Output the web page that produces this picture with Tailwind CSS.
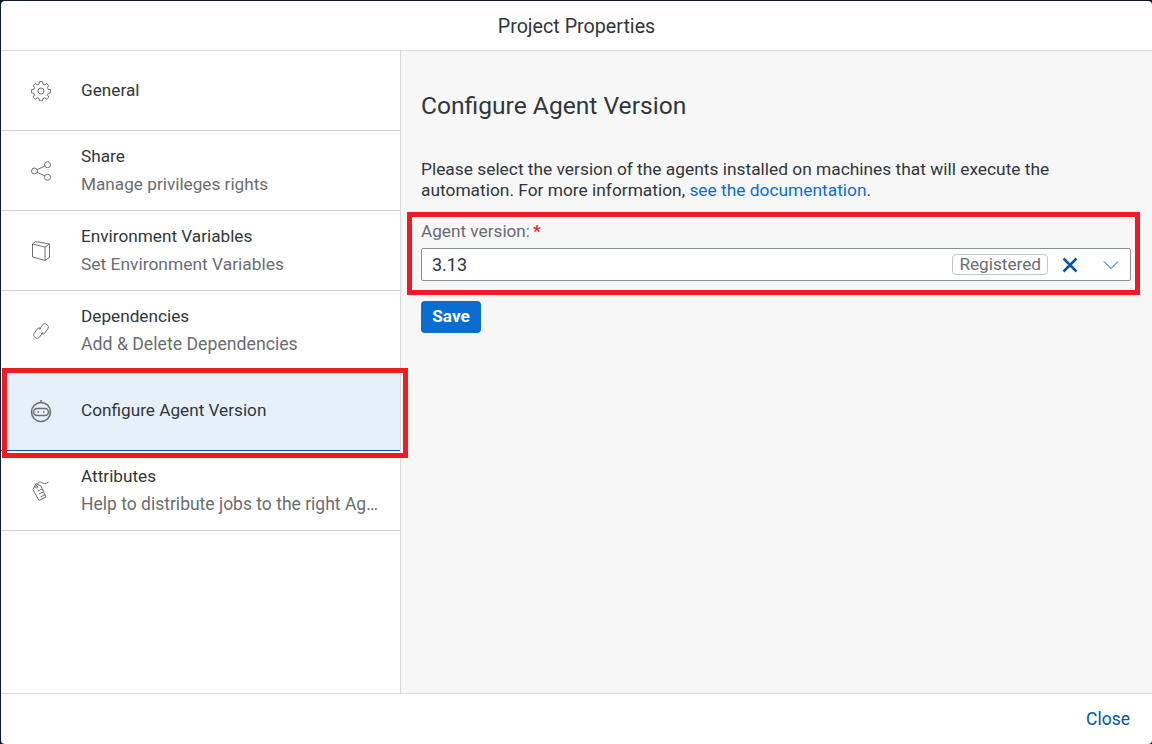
<!DOCTYPE html>
<html lang="en">
<head>
    <meta charset="UTF-8">
    <title>Project Properties</title>
    <script src="https://cdn.jsdelivr.net/npm/@tailwindcss/browser@4"></script>
</head>
<body class="bg-[#0c1a2b] font-['Roboto',sans-serif]">
    <div class="relative flex flex-col w-[1151px] h-[743px] mt-px ml-px bg-white rounded-[4px] overflow-hidden text-[#32363a] text-[17.2px]">
        <header class="flex items-center justify-center h-[50px] shrink-0 border-b border-[#d9d9d9] pt-[2px] text-[19.7px]">Project Properties</header>
        <div class="flex flex-1 min-h-0">
            <nav class="w-[400px] shrink-0 border-r border-[#d9d9d9]">
                <div class="flex items-center h-[80px] border-b border-[#d0d0d0]">
                    <svg class="w-[20px] h-[20px] ml-[30px] mr-[30px] shrink-0" viewBox="0 0 20 20" fill="none" stroke="#6a6d70" stroke-width="1">
                        <circle cx="10" cy="10" r="3"/>
                        <path d="M8.5 .7h3l.5 2.4 1.7.7 2-1.3 2.1 2.1-1.3 2 .7 1.7 2.4.5v3l-2.4.5-.7 1.7 1.3 2-2.1 2.1-2-1.3-1.7.7-.5 2.4h-3l-.5-2.4-1.7-.7-2 1.3-2.1-2.1 1.3-2-.7-1.7-2.4-.5v-3l2.4-.5.7-1.7-1.3-2 2.1-2.1 2 1.3 1.7-.7z"/>
                    </svg>
                    <div>General</div>
                </div>
                <div class="flex items-center h-[80px] border-b border-[#d0d0d0]">
                    <svg class="w-[20px] h-[20px] ml-[30px] mr-[30px] shrink-0" viewBox="0 0 20 20" fill="none" stroke="#6a6d70" stroke-width="1">
                        <circle cx="3.5" cy="10" r="3"/><circle cx="16.5" cy="3.7" r="3"/><circle cx="16.5" cy="16.3" r="3"/>
                        <path d="M6.2 8.7l7.6-3.7M6.2 11.3l7.6 3.7"/>
                    </svg>
                    <div class="mb-[2px]">
                        <div class="leading-[28px]">Share</div>
                        <div class="leading-[28px] text-[#6a6d70]">Manage privileges rights</div>
                    </div>
                </div>
                <div class="flex items-center h-[80px] border-b border-[#d0d0d0]">
                    <svg class="w-[20px] h-[20px] ml-[30px] mr-[30px] shrink-0" viewBox="0 0 20 20" fill="none" stroke="#6a6d70" stroke-width="1">
                        <path d="M1.500 3l12.500 3v13.500l-12.500-3.500zM1.500 3l3-2.500 14 2.500v13.500l-4.500 3M14 6l4.500-3"/>
                    </svg>
                    <div class="mb-[2px]">
                        <div class="leading-[28px]">Environment Variables</div>
                        <div class="leading-[28px] text-[#6a6d70] text-[17.4px]">Set Environment Variables</div>
                    </div>
                </div>
                <div class="flex items-center h-[80px] border-b border-[#d0d0d0]">
                    <svg class="w-[18px] h-[18px] ml-[31px] mr-[31px] shrink-0" viewBox="0 0 20 20" fill="none" stroke="#6a6d70" stroke-width="1.100">
                        <path d="M8 8.500l3.500-5a3 3 0 0 1 5-.500 3 3 0 0 1 1 4.500l-3 4.500a3 3 0 0 1-4.500 .500"/>
                        <path d="M12 11.500l-3.500 5a3 3 0 0 1-5 .500 3 3 0 0 1-1-4.500l3-4.500a3 3 0 0 1 4.500-.500"/>
                    </svg>
                    <div class="mb-[2px]">
                        <div class="leading-[28px]">Dependencies</div>
                        <div class="leading-[28px] text-[#6a6d70] text-[17.7px]">Add &amp; Delete Dependencies</div>
                    </div>
                </div>
                <div class="flex items-center h-[80px] bg-[#e5f0fa] border-b border-[#0854a0]">
                    <svg class="w-[22px] h-[24px] ml-[29px] mr-[29px] shrink-0" viewBox="0 0 22 24" fill="none" stroke="#6a6d70" stroke-width="1.500">
                        <circle cx="11" cy="13" r="9.500"/>
                        <rect x="3.500" y="9.500" width="15" height="7" rx="3.500"/>
                        <path d="M11 3.500v-2.500"/>
                        <path d="M7.500 13h1.500M13 13h1.500"/>
                    </svg>
                    <div>Configure Agent Version</div>
                </div>
                <div class="flex items-center h-[80px] border-b border-[#d0d0d0]">
                    <svg class="w-[20px] h-[22px] ml-[30px] mr-[30px] shrink-0" viewBox="0 0 20 22" fill="none" stroke="#6a6d70" stroke-width="1">
                        <path d="M5 3.500l5 2.500 5 11-7 3.500-6-11z"/>
                        <circle cx="5.500" cy="7" r="1"/>
                        <path d="M5.500 6c1-3 3-5 5-3.500s4 1.500 7-.500M7 11l4-2M8 14l5-2.500M9.500 17l4.500-2.500"/>
                    </svg>
                    <div class="mb-[2px]">
                        <div class="leading-[28px]">Attributes</div>
                        <div class="leading-[28px] text-[#6a6d70] text-[17.5px]">Help to distribute jobs to the right Ag…</div>
                    </div>
                </div>
            </nav>
            <main class="flex-1 bg-[#f7f7f7] pl-[20px] pr-[20px] pt-[35px]">
                <h1 class="text-[24.6px] leading-[40px]">Configure Agent Version</h1>
                <p class="mt-[33px] leading-[21px] text-[17.35px]">Please select the version of the agents installed on machines that will execute the automation. For more information, <a class="text-[#0a6ed1]">see the documentation</a>.</p>
                <div class="mt-[16px] leading-[28px] text-[#6a6d70]">Agent version:<span class="ml-[3px] text-[#e02d2d] font-bold">*</span></div>
                <div class="flex items-center h-[33px] mt-[3px] mr-px border border-[#89919a] rounded-[2px] bg-white pl-[10px]">
                    <span class="flex-1 text-[18px]">3.13</span>
                    <span class="px-[6px] h-[21px] leading-[19px] border border-[#c4c4c4] rounded-[4px] text-[#6a6d70]">Registered</span>
                    <svg class="w-[16px] h-[16px] ml-[14px]" viewBox="0 0 16 16" fill="none" stroke="#0854a0" stroke-width="2.500"><path d="M1.500 1.500l13 13M14.500 1.500l-13 13"/></svg>
                    <svg class="w-[16px] h-[10px] ml-[25px] mr-[11px]" viewBox="0 0 16 10" fill="none" stroke="#0854a0" stroke-width="1"><path d="M1 1.500l7 7 7-7"/></svg>
                </div>
                <button class="block mt-[20px] h-[32px] w-[60px] rounded-[4px] bg-[#0a6ed1] text-white font-bold">Save</button>
            </main>
        </div>
        <footer class="flex items-center justify-end h-[51px] shrink-0 border-t border-[#d9d9d9] pr-[22px] text-[17.5px] text-[#0854a0]">Close</footer>
        <div class="absolute left-[1px] top-[367px] w-[406px] h-[90px] border-[5px] border-[#ed1c24]"></div>
        <div class="absolute left-[406px] top-[211px] w-[733px] h-[83px] border-[5px] border-[#ed1c24]"></div>
    </div>
</body>
</html>
